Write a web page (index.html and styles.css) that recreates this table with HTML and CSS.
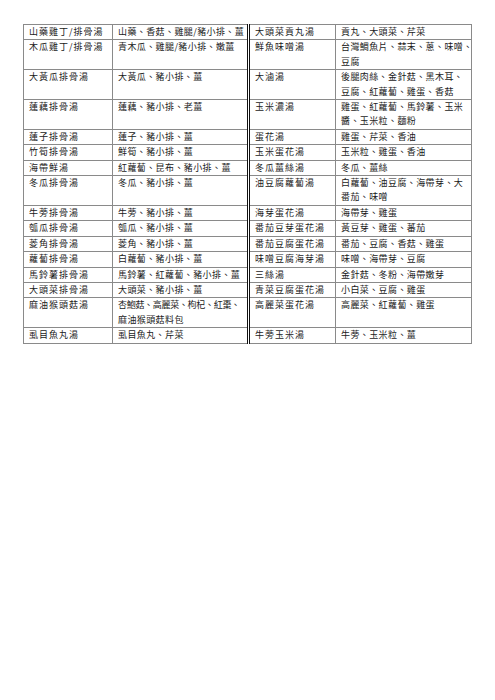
FILE: index.html
```html
<!DOCTYPE html>
<html lang="zh-Hant">
<head>
<meta charset="utf-8">
<title>湯品表</title>
<link rel="stylesheet" href="styles.css">
</head>
<body>
<div class="page">
<table class="menu">
<colgroup>
<col class="c-name"><col class="c-ing"><col class="c-name2"><col class="c-ing">
</colgroup>
<tbody>
<tr><td class="nm">山藥雞丁/排骨湯</td><td>山藥、香菇、雞腿/豬小排、薑</td><td class="nm mid">大頭菜貢丸湯</td><td>貢丸、大頭菜、芹菜</td></tr>
<tr><td class="nm">木瓜雞丁/排骨湯</td><td>青木瓜、雞腿/豬小排、嫩薑</td><td class="nm mid">鮮魚味噌湯</td><td>台灣鯛魚片、蒜末、蔥、味噌、<br>豆腐</td></tr>
<tr><td class="nm">大黃瓜排骨湯</td><td>大黃瓜、豬小排、薑</td><td class="nm mid">大滷湯</td><td>後腿肉絲、金針菇、黑木耳、<br>豆腐、紅蘿蔔、雞蛋、香菇</td></tr>
<tr><td class="nm">蓮藕排骨湯</td><td>蓮藕、豬小排、老薑</td><td class="nm mid">玉米濃湯</td><td>雞蛋、紅蘿蔔、馬鈴薯、玉米<br>醬、玉米粒、麵粉</td></tr>
<tr><td class="nm">蓮子排骨湯</td><td>蓮子、豬小排、薑</td><td class="nm mid">蛋花湯</td><td>雞蛋、芹菜、香油</td></tr>
<tr><td class="nm">竹筍排骨湯</td><td>鮮筍、豬小排、薑</td><td class="nm mid">玉米蛋花湯</td><td>玉米粒、雞蛋、香油</td></tr>
<tr><td class="nm">海帶鮮湯</td><td>紅蘿蔔、昆布、豬小排、薑</td><td class="nm mid">冬瓜薑絲湯</td><td>冬瓜、薑絲</td></tr>
<tr><td class="nm">冬瓜排骨湯</td><td>冬瓜、豬小排、薑</td><td class="nm mid">油豆腐蘿蔔湯</td><td>白蘿蔔、油豆腐、海帶芽、大<br>番茄、味噌</td></tr>
<tr><td class="nm">牛蒡排骨湯</td><td>牛蒡、豬小排、薑</td><td class="nm mid">海芽蛋花湯</td><td>海帶芽、雞蛋</td></tr>
<tr><td class="nm">瓠瓜排骨湯</td><td>瓠瓜、豬小排、薑</td><td class="nm mid">番茄豆芽蛋花湯</td><td>黃豆芽、雞蛋、蕃茄</td></tr>
<tr><td class="nm">菱角排骨湯</td><td>菱角、豬小排、薑</td><td class="nm mid">番茄豆腐蛋花湯</td><td>番茄、豆腐、香菇、雞蛋</td></tr>
<tr><td class="nm">蘿蔔排骨湯</td><td>白蘿蔔、豬小排、薑</td><td class="nm mid">味噌豆腐海芽湯</td><td>味噌、海帶芽、豆腐</td></tr>
<tr><td class="nm">馬鈴薯排骨湯</td><td>馬鈴薯、紅蘿蔔、豬小排、薑</td><td class="nm mid">三絲湯</td><td>金針菇、冬粉、海帶嫩芽</td></tr>
<tr><td class="nm">大頭菜排骨湯</td><td>大頭菜、豬小排、薑</td><td class="nm mid">青菜豆腐蛋花湯</td><td>小白菜、豆腐、雞蛋</td></tr>
<tr><td class="nm">麻油猴頭菇湯</td><td><span class="tight">杏鮑菇、高麗菜、枸杞、紅棗、</span><br>麻油猴頭菇料包</td><td class="nm mid">高麗菜蛋花湯</td><td>高麗菜、紅蘿蔔、雞蛋</td></tr>
<tr><td class="nm">虱目魚丸湯</td><td>虱目魚丸、芹菜</td><td class="nm mid">牛蒡玉米湯</td><td>牛蒡、玉米粒、薑</td></tr>
</tbody>
</table>
</div>
</body>
</html>
```

FILE: styles.css
```css
html, body {
  margin: 0;
  padding: 0;
  background: #ffffff;
}

body {
  font-family: "Noto Sans CJK TC", "Noto Sans CJK SC", sans-serif;
  color: #1a1a1a;
}

.page {
  width: 495px;
  height: 700px;
  padding: 24px 0 0 23px;
  box-sizing: border-box;
}

.menu {
  border-collapse: collapse;
  table-layout: fixed;
  width: 448px;
  font-size: 9px;
  line-height: 14.4px;
}

.c-name { width: 89px; }
.c-name2 { width: 87px; }
.c-ing { width: 136px; }

.menu td {
  border: 1px solid #8a8a8a;
  padding: 0 2px 0 5px;
  vertical-align: top;
  white-space: nowrap;
  overflow: hidden;
  letter-spacing: 0.4px;
}

.menu td.nm {
  letter-spacing: 1px;
}

.menu td.mid {
  border-left: 3px double #111111;
}

.tight {
  letter-spacing: -0.3px;
}
```
